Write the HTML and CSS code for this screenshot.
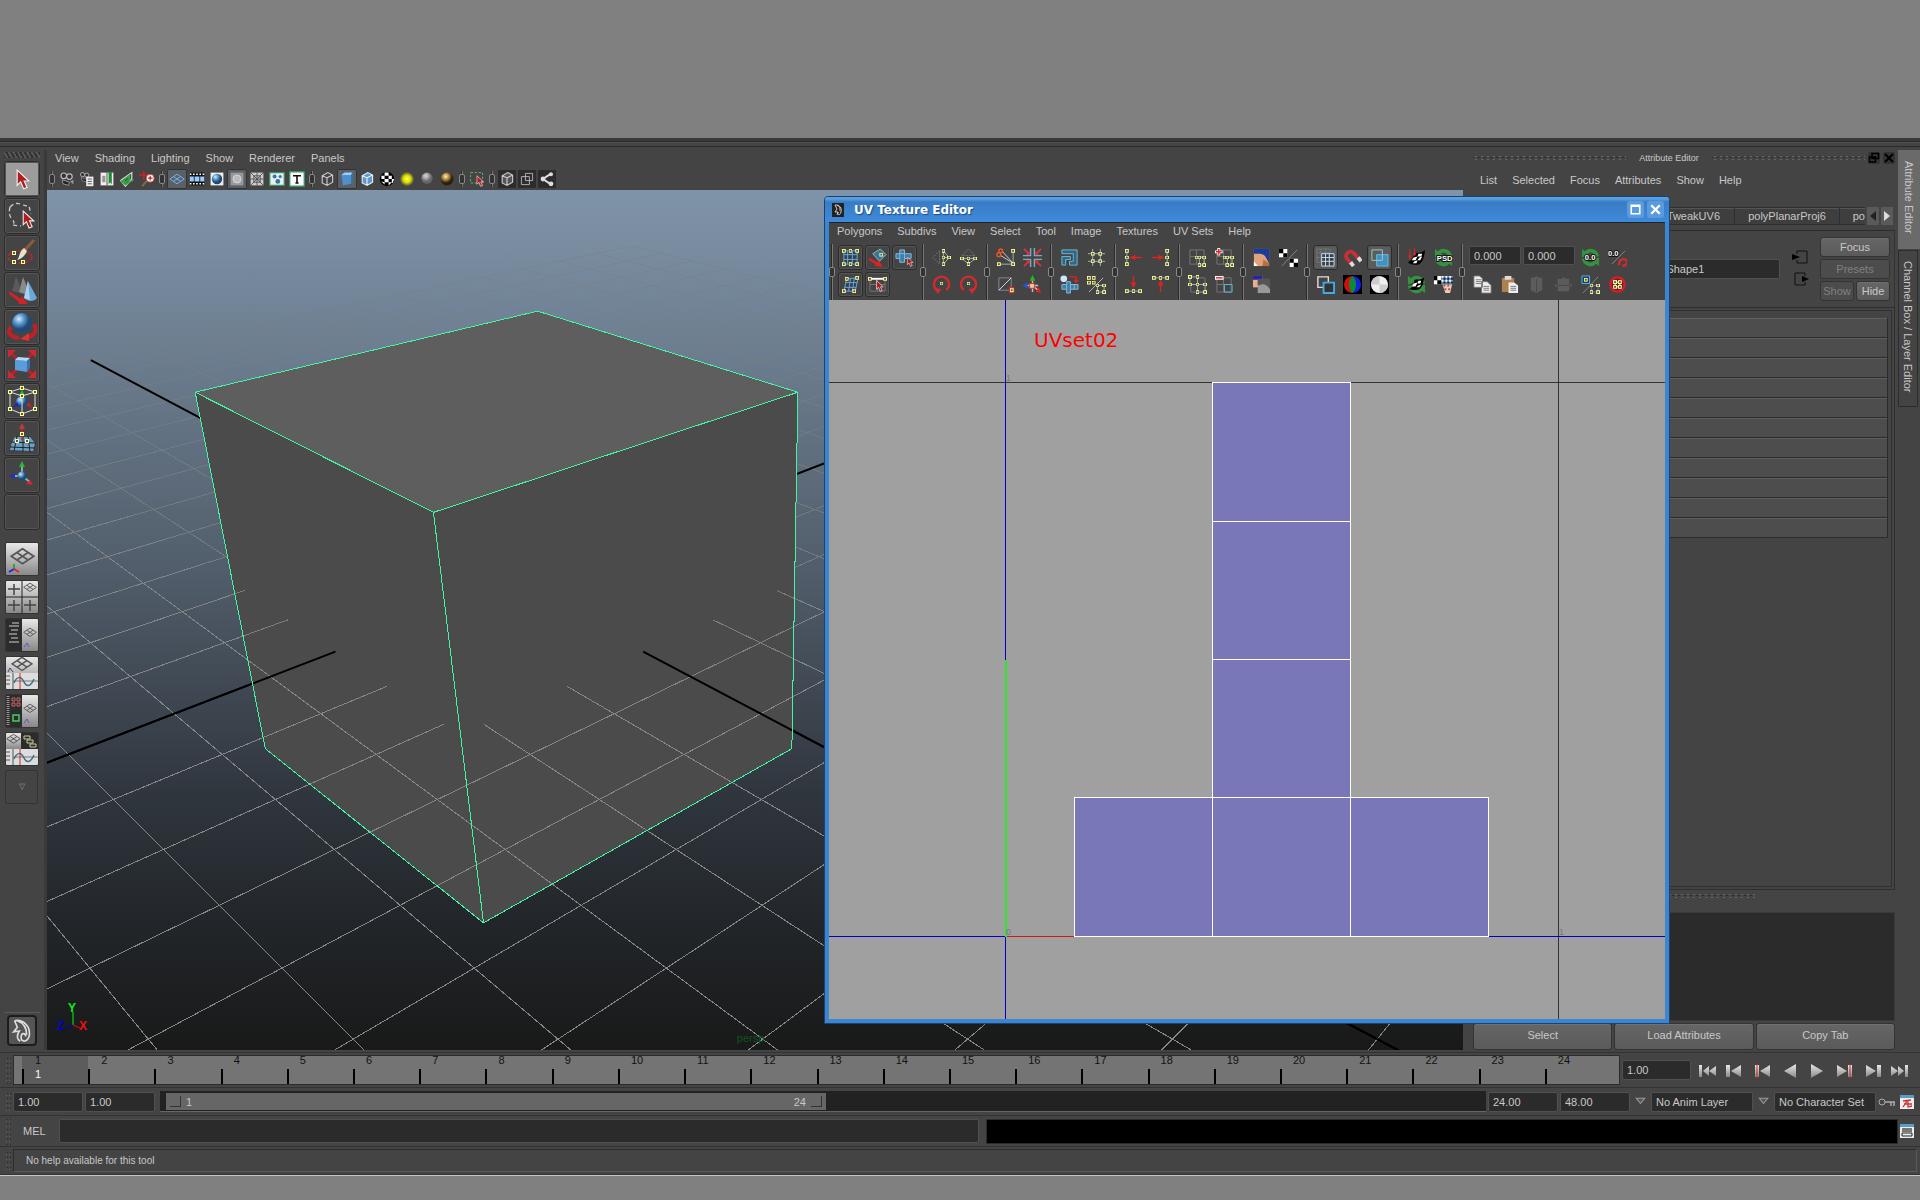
FILE: index.html
```html
<!DOCTYPE html>
<html lang="en">
<head>
    <meta charset="UTF-8">
    <meta name="viewport" content="width=device-width, initial-scale=1.0">
    <title>UV Texture Editor</title>
    <link rel="stylesheet" href="styles.css">
</head>
<body>
    <!-- Shared gradients, markers and symbols -->
    <svg class="defs" aria-hidden="true">
        <defs>
            <marker id="node" markerWidth="4" markerHeight="4" refX="2" refY="2" markerUnits="userSpaceOnUse"><rect x=".5" y=".5" width="3" height="3" fill="#555" stroke="#ffff90"/></marker>
            <radialGradient id="ball-blue" cx=".35" cy=".3"><stop offset="0" stop-color="#d8ecfa"/><stop offset=".5" stop-color="#5a9bd0"/><stop offset="1" stop-color="#1f4a75"/></radialGradient>
            <radialGradient id="ball-gray" cx=".4" cy=".3"><stop offset="0" stop-color="#ddd"/><stop offset="1" stop-color="#666"/></radialGradient>
            <radialGradient id="ball-gold" cx=".4" cy=".3"><stop offset="0" stop-color="#fff2c0"/><stop offset=".5" stop-color="#b08a40"/><stop offset="1" stop-color="#2a2010"/></radialGradient>
            <radialGradient id="glow"><stop offset="0" stop-color="#ffff50"/><stop offset=".5" stop-color="#dddd00"/><stop offset="1" stop-color="#dddd00" stop-opacity="0"/></radialGradient>
            <linearGradient id="metal" x2="0" y2="1"><stop offset="0" stop-color="#e8e8e8"/><stop offset="1" stop-color="#888"/></linearGradient>
            <symbol id="cursor" viewBox="0 0 12 18"><path d="M1 1v13l3-3 2.500 6 3-1.200-2.500-5.500H11z" fill="#b01c20" stroke="#eee"/></symbol>
            <symbol id="plane" viewBox="0 0 20 20"><path d="M10 3l9 6-9 6-9-6zM5.500 6l9 6M14.500 6l-9 6" fill="none" stroke="#555" stroke-width="1.300"/></symbol>
            <symbol id="graph" viewBox="0 0 32 16"><path d="M0 0h32v16H0z" fill="#ddd"/><path d="M7 0v16M0 3h4M0 7h4M0 11h4" stroke="#555"/><path d="M7 8h25" stroke="#777"/><path d="M8 10c3-7 7-7 10-1s7 4 10-3" fill="none" stroke="#3c7085" stroke-width="1.500"/><path d="M14 0v16" stroke="#d22"/></symbol>
            <symbol id="cube" viewBox="0 0 20 20"><path d="M4 6l7-4 6 3v9l-7 4-6-3zM4 6l6 2.500v9.500M10 8.500l7-3.500" stroke-width="1.400"/></symbol>
            <symbol id="camera" viewBox="0 0 20 20"><path d="M4 11l9 3-1 4-7-2z" fill="#222" stroke="#aaa"/><circle cx="6" cy="6" r="3.500" fill="#333" stroke="#bbb" stroke-width="1.500"/><circle cx="13" cy="7" r="3.500" fill="#333" stroke="#bbb" stroke-width="1.500"/><path d="M14 13l4-2v6z" fill="#999"/></symbol>
            <symbol id="checks" viewBox="0 0 8 8"><path d="M0 0h8v8H0z" fill="#fff"/><path d="M0 0h4v4H0zM4 4h4v4H4z" fill="#000"/></symbol>
            <symbol id="recycle" viewBox="0 0 20 20"><path d="M17 9a7 7 0 0 0-12-4" fill="none" stroke="#35933f" stroke-width="4"/><path d="M1 1v9l8-3z" fill="#35933f"/><path d="M3 11a7 7 0 0 0 12 4" fill="none" stroke="#35933f" stroke-width="4"/><path d="M19 19v-9l-8 3z" fill="#35933f"/></symbol>
        </defs>
    </svg>

    <div class="app">
        <div class="shelf-edge"></div>

        <div class="main">
            <!-- Tool box -->
            <aside class="toolbox">
                <div class="tools">
                    <div class="grip-h"></div>
                    <button class="tool active" aria-label="Select"><svg viewBox="0 0 32 32"><use href="#cursor" x="10" y="6" width="14" height="21"/></svg></button>
                    <button class="tool" aria-label="Lasso"><svg viewBox="0 0 32 32"><path d="M4 7q5-5 10-3t9 2l2 8M4 7q-2 8 2 12t0 6l9 1" fill="none" stroke="#ccc" stroke-width="1.300" stroke-dasharray="4 3"/><use href="#cursor" x="16" y="10" width="13" height="19"/></svg></button>
                    <button class="tool" aria-label="Paint select"><svg viewBox="0 0 32 32"><ellipse cx="14" cy="20" rx="12" ry="6" fill="none" stroke="#c22" stroke-width="1.500" stroke-dasharray="4 2"/><path d="M28 3L18 14" stroke="#8b5a3a" stroke-width="3"/><path d="M18 11l3 3c-2 5-6 8-10 9 3-3 2-9 7-12z" fill="#e5e2c8"/><path class="nodes" d="M8 16M8 25M17 25"/></svg></button>
                    <button class="tool" aria-label="Move"><svg viewBox="0 0 32 32"><path d="M10 3l8 17-12-3z" fill="#5a5a5a"/><path d="M17 3l8 19-12-4z" fill="#8a8a8a"/><path d="M22 7l9 17c-3 4-9 4-13 0z" fill="#6aa8d8"/><path d="M22 7l2 19-6-2z" fill="#a8d2f0"/><path d="M3 17l12 8 1-3 6 8-10 0 1-2L3 20z" fill="#d02228"/></svg></button>
                    <button class="tool" aria-label="Rotate"><svg viewBox="0 0 32 32"><path d="M5 16c-5 6 0 10 8 11M28 13c4 8-1 13-9 14" fill="none" stroke="#c02028" stroke-width="4"/><path d="M14 28l9-6v8z" fill="#d33"/><circle cx="16" cy="12" r="10" fill="url(#ball-blue)"/></svg></button>
                    <button class="tool" aria-label="Scale"><svg viewBox="0 0 32 32"><path d="M5 5l22 22M27 5L5 27" stroke="#c02028" stroke-width="2.500"/><path d="M2 2h8l-8 8zM30 2v8l-8-8zM2 30v-8l8 8zM30 30h-8l8-8z" fill="#d02830"/><path d="M9 12l12 1v11l-12-2z" fill="#5a9bdc"/><path d="M9 12l3-3 12 1-3 3z" fill="#b4dcfa"/><path d="M21 13l3-3v10l-3 4z" fill="#37a"/></svg></button>
                    <button class="tool" aria-label="Universal manipulator"><svg viewBox="0 0 32 32"><circle cx="16" cy="17" r="6" fill="url(#ball-blue)"/><path d="M13 11h6l-3-6z" fill="#2c2"/><path d="M7 22l4-5 2 4z" fill="#22c"/><path d="M26 23l-6-3 3-3z" fill="#c22"/><path class="nodes" d="M4 7l12-4 13 4v17l-13 5L4 24zl12 4 13-4M16 11v18" fill="none" stroke="#ddd"/></svg></button>
                    <button class="tool" aria-label="Soft modification"><svg viewBox="0 0 32 32"><path d="M9 15l15 0 5 6-2 8-23-1 2-8z" fill="#6aa0cc"/><path d="M11 14l-3 15M17 14v16M22 14l2 16M5 20l25 1M4 25l25 1" stroke="#222"/><path d="M16 18V6" stroke="#c22" stroke-width="1.500"/><path d="M16 1l-3 6h6z" fill="#c33"/><path class="nodes" d="M11 19M16 12M21 19"/></svg></button>
                    <button class="tool" aria-label="Show manipulator"><svg viewBox="0 0 32 32"><path d="M16 17V8M16 17l-8 0M16 17l8 6" stroke="#8ab" stroke-width="2"/><path d="M13 8h6l-3-6z" fill="#2b3"/><path d="M3 17l6-3v6z" fill="#23b"/><path d="M27 26l-7-1 4-4z" fill="#d23"/><circle cx="16" cy="17" r="4.500" fill="url(#ball-blue)"/></svg></button>
                    <button class="tool" aria-label="Last tool"></button>
                </div>
                <div class="layouts">
                    <button class="layout" aria-label="Single perspective view"><svg viewBox="0 0 32 32"><path d="M0 0h32v32H0z" fill="url(#metal)"/><use href="#plane" x="4" y="2" width="25" height="25"/><path d="M8 21v6" stroke="#2a4" stroke-width="2"/><path d="M8 26l-5 3" stroke="#22e" stroke-width="2"/><path d="M8 26l5 3" stroke="#e22" stroke-width="2"/></svg></button>
                    <button class="layout" aria-label="Four view"><svg viewBox="0 0 32 32"><path d="M0 0h32v32H0z" fill="url(#metal)"/><path d="M16 0v32M0 16h32" stroke="#222"/><path d="M8 3v11M2 8h12M8 19v11M2 24h12M24 19v11M18 24h12" stroke="#444" stroke-width="1.500"/><use href="#plane" x="17" y="0" width="14" height="14"/></svg></button>
                    <button class="layout" aria-label="Outliner and perspective"><svg viewBox="0 0 32 32"><path d="M0 0h32v32H0z" fill="#2c2c2c"/><path d="M16 0h16v32H16z" fill="url(#metal)"/><path d="M6 4h7M3 7h10M5 11h7M3 15h8M5 19h7M3 23h10" stroke="#ccc"/><use href="#plane" x="17" y="7" width="14" height="14"/><path d="M18 28l3-4 2 4" fill="none" stroke="#55c"/></svg></button>
                    <button class="layout" aria-label="Perspective and graph"><svg viewBox="0 0 32 32"><path d="M0 0h32v32H0z" fill="url(#metal)"/><use href="#plane" x="5" y="-3" width="22" height="22"/><path d="M2 15l2-4 3 4" fill="none" stroke="#447"/><use href="#graph" y="16" width="32" height="16"/></svg></button>
                    <button class="layout" aria-label="Hypershade and perspective"><svg viewBox="0 0 32 32"><path d="M0 0h32v32H0z" fill="#2c2c2c"/><path d="M16 0h16v32H16z" fill="url(#metal)"/><path d="M2 1v30" stroke="#999" stroke-width="3" stroke-dasharray="1 1"/><path d="M6 3h3v3H6zM11 3h3v3h-3zM6 8h3v3H6zM11 8h3v3h-3z" fill="none" stroke="#c66"/><path d="M7 20h6v6H7z" fill="none" stroke="#4c6" stroke-width="1.500"/><use href="#plane" x="17" y="7" width="14" height="14"/><path d="M18 28l3-4 2 4" fill="none" stroke="#55c"/></svg></button>
                    <button class="layout" aria-label="Perspective, hypergraph and graph"><svg viewBox="0 0 32 32"><path d="M0 0h32v32H0z" fill="#2c2c2c"/><path d="M0 0h15v16H0z" fill="url(#metal)"/><use href="#plane" x="0" y="-1" width="15" height="15"/><path d="M18 3h6v3h-6zM21 7h6v3h-6zM24 11h6v3h-6z" fill="none" stroke="#cc9"/><use href="#graph" y="16" width="32" height="16"/></svg></button>
                    <button class="layout more" aria-label="More layouts">▽</button>
                </div>
                <button class="logo" aria-label="Maya"><svg viewBox="0 0 28 28"><path d="M6 3c9-2 17 6 16 15-1 8-9 9-9 3s5-5 5-1M9 3c8 3 10 9 10 15M6 3l3 7-4 5 6-1c-3 5-2 9 1 11" fill="none" stroke="#ddd" stroke-width="1.800"/></svg></button>
            </aside>

            <!-- Perspective panel -->
            <section class="panel">
                <nav class="menu panel-menu">
                    <button>View</button><button>Shading</button><button>Lighting</button><button>Show</button><button>Renderer</button><button>Panels</button>
                </nav>
                <div class="panel-tools">
                    <i class="sep"></i>
                    <button aria-label="Select camera"><svg viewBox="0 0 20 20"><use href="#camera"/></svg></button>
                    <button aria-label="Camera attributes"><svg viewBox="0 0 20 20"><use href="#camera" width="15" height="15"/><path d="M9 7h9v12H9z" fill="#eee"/><path d="M11 10h5M11 13h5M11 16h5" stroke="#333"/></svg></button>
                    <button aria-label="Bookmarks"><svg viewBox="0 0 20 20"><path d="M2 2h16v16H2z" fill="#eee"/><path d="M10 2v16" stroke="#333"/><path d="M12 1h4v16l-2-3-2 3z" fill="#283"/><path d="M4 6h4v8H4z" fill="#999"/></svg></button>
                    <button aria-label="Image plane"><svg viewBox="0 0 20 20"><path d="M2 12L16 2v8L8 19z" fill="#444" stroke="#ddd" stroke-width="1.500"/><path d="M2 12l6 5 10-6M5 12l8-6v4l-5 4z" fill="none" stroke="#3a4" stroke-width="2"/></svg></button>
                    <button aria-label="2D pan and zoom"><svg viewBox="0 0 20 20"><path d="M6 0v11M0 5h11" stroke="#c22" stroke-width="2"/><path d="M10 12l-6 7" stroke="#864" stroke-width="2.500"/><circle cx="14" cy="9" r="5" fill="#fff" stroke="#a33"/><path d="M14 6v6M11 9h6" stroke="#b22" stroke-width="1.500"/></svg></button>
                    <i class="sep"></i>
                    <button class="on" aria-label="Grid"><svg viewBox="0 0 20 20"><path d="M10 4l9 6-9 6-9-6zM5.500 7l9 6M14.500 7l-9 6" fill="#4a6680" stroke="#9bd"/></svg></button>
                    <button aria-label="Film gate"><svg viewBox="0 0 20 20"><path d="M1 2h18v16H1z" fill="#111"/><path d="M1 4h18M1 16h18" stroke="#fff" stroke-width="2" stroke-dasharray="2 2"/><path d="M1 7h5v6H1zM7 7h6v6H7zM14 7h5v6h-5z" fill="#9cf"/></svg></button>
                    <button aria-label="Resolution gate"><svg viewBox="0 0 20 20"><path d="M2 2h16v16H2z" fill="#eee"/><circle cx="10" cy="10" r="6.500" fill="url(#ball-blue)"/></svg></button>
                    <button class="on" aria-label="Gate mask"><svg viewBox="0 0 20 20"><path d="M2 2h16v16H2z" fill="#999"/><circle cx="10" cy="10" r="5" fill="#bbb" stroke="#ddd"/></svg></button>
                    <button aria-label="Field chart"><svg viewBox="0 0 20 20"><path d="M2 2h16v16H2z" fill="#ccc"/><path d="M2 2l16 16M18 2L2 18M10 2v16M2 10h16M6 6h8v8H6z" fill="none" stroke="#444"/></svg></button>
                    <button aria-label="Safe action"><svg viewBox="0 0 20 20"><path d="M1 2h18v16H1z" fill="#eee" stroke="#396" stroke-width="1.500"/><circle cx="7" cy="7" r="2.500" fill="#37a"/><circle cx="14" cy="7" r="2" fill="#37a"/><circle cx="11" cy="13" r="3" fill="#37a"/></svg></button>
                    <button aria-label="Safe title"><svg viewBox="0 0 20 20"><path d="M1 1h18v18H1z" fill="#fff" stroke="#396" stroke-width="1.500"/><path d="M5 6h10M10 6v9M8 15h4" stroke="#111" stroke-width="2"/></svg></button>
                    <i class="sep"></i>
                    <button aria-label="Wireframe"><svg viewBox="0 0 20 20" fill="none" stroke="#ccc"><use href="#cube"/></svg></button>
                    <button class="on" aria-label="Smooth shade"><svg viewBox="0 0 20 20"><path d="M3 5l12-1v12L5 18z" fill="#4f8fcc"/><path d="M3 5l4-3h10l-2 3z" fill="#9cf"/><path d="M15 5l2-3v11l-2 3z" fill="#37a"/></svg></button>
                    <button aria-label="Wireframe on shaded"><svg viewBox="0 0 20 20" fill="#5a9ad0" stroke="#eee"><use href="#cube"/></svg></button>
                    <button aria-label="Textured"><svg viewBox="0 0 20 20"><circle cx="10" cy="10" r="9" fill="#000"/><path d="M7 2h5v4H7zM3 6h4v4H3zM12 6h4v4h-4zM7 10h5v4H7zM16 10h3l-2 5h-1zM12 14h4l-4 4zM3 13l4 1v3z" fill="#fff"/></svg></button>
                    <button aria-label="Use all lights"><svg viewBox="0 0 20 20"><circle cx="10" cy="10" r="9" fill="url(#glow)"/></svg></button>
                    <button aria-label="Shadows"><svg viewBox="0 0 20 20"><circle cx="10" cy="9" r="7" fill="url(#ball-gray)"/></svg></button>
                    <button aria-label="High quality"><svg viewBox="0 0 20 20"><circle cx="10" cy="10" r="8" fill="url(#ball-gold)"/></svg></button>
                    <i class="sep"></i>
                    <button aria-label="Isolate select"><svg viewBox="0 0 20 20"><path d="M2 2h15v13H2z" fill="none" stroke="#6c7" stroke-dasharray="3 2"/><use href="#cursor" x="9" y="5" width="10" height="15"/></svg></button>
                    <i class="sep"></i>
                    <button class="dark" aria-label="X-ray"><svg viewBox="0 0 20 20" fill="#555" stroke="#ccc"><use href="#cube"/></svg></button>
                    <button class="dark" aria-label="X-ray components"><svg viewBox="0 0 20 20"><path d="M3 7h10v10H3zM8 3h9v9H8z" fill="none" stroke="#ccc"/></svg></button>
                    <button class="dark" aria-label="X-ray joints"><svg viewBox="0 0 20 20"><path d="M14 4L5 10l9 6" fill="none" stroke="#ddd" stroke-width="2.500"/><circle cx="5" cy="10" r="3" fill="#ddd"/><circle cx="15" cy="4" r="2.500" fill="#ddd"/><circle cx="15" cy="16" r="3" fill="#ddd"/></svg></button>
                </div>
                <svg class="viewport" viewBox="47 190 1416 859" preserveAspectRatio="xMinYMin slice" role="img" aria-label="Perspective view of a cube">
                    <defs>
                        <linearGradient id="sky" x2="0" y2="1"><stop offset="0" stop-color="#8094a9"/><stop offset=".2" stop-color="#6b7c8e"/><stop offset=".45" stop-color="#505c69"/><stop offset=".7" stop-color="#30363e"/><stop offset=".85" stop-color="#22262a"/><stop offset="1" stop-color="#191919"/></linearGradient>
                        <linearGradient id="fade" gradientUnits="userSpaceOnUse" x1="0" x2="0" y1="240" y2="700"><stop offset="0" stop-color="#777" stop-opacity=".3"/><stop offset=".4" stop-color="#808386" stop-opacity=".5"/><stop offset="1" stop-color="#848688"/></linearGradient>
                    </defs>
                    <path d="M47 190h1416v859H47z" fill="url(#sky)"/>
                    <path id="grid-back" class="grid" stroke="url(#fade)"/>
                    <path id="axes-back" class="axes"/>
                    <path d="M195 392L537 311l260 81-6 356-308 174-218-174z" fill="#4b4b4b"/>
                    <path d="M195 392l342-81 260 81-364 120z" fill="#5e5e5e"/>
                    <path id="grid-front" class="grid" stroke="url(#fade)"/>
                    <path id="axes-front" class="axes"/>
                    <path class="edges" d="M195 392l342-81 260 81-6 356-308 174-218-174zl238 120 364-120M433 512l50 410"/>
                    <path d="M73 1024v-13" stroke="#0f0"/><path d="M73 1024l-7 3" stroke="#00c"/><path d="M73 1024l7 3" stroke="#e00"/>
                    <text class="axis y" x="68" y="1011">Y</text>
                    <text class="axis z" x="57" y="1029">Z</text>
                    <text class="axis x" x="79" y="1029">X</text>
                    <text class="camera-name" x="736" y="1041">persp</text>
                </svg>
            </section>

            <!-- Attribute editor -->
            <section class="attributes">
                <header class="attr-title"><i class="dots"></i><span>Attribute Editor</span><i class="dots"></i><button aria-label="Float"><svg viewBox="0 0 12 12"><path d="M4 1.500h6.500v5H4zM1.500 5h6v5h-6z" fill="none" stroke="#000" stroke-width="1.500"/></svg></button><button aria-label="Close panel"><svg viewBox="0 0 12 12"><path d="M2 2l8 8M10 2l-8 8" stroke="#000" stroke-width="2"/></svg></button></header>
                <nav class="menu attr-menu">
                    <button>List</button><button>Selected</button><button>Focus</button><button>Attributes</button><button>Show</button><button>Help</button>
                </nav>
                <div class="attr-tabs">
                    <button class="tab first">polyTweakUV6</button><button class="tab">polyPlanarProj6</button><button class="tab cut">po</button>
                    <button class="arrow" aria-label="Previous tab"><svg viewBox="0 0 12 18"><path d="M9 4v10L3 9z" fill="#222"/></svg></button><button class="arrow" aria-label="Next tab"><svg viewBox="0 0 12 18"><path d="M3 4v10l6-5z" fill="#ddd"/></svg></button>
                </div>
                <div class="attr-node">
                    <input class="field name" type="text" value="pCubeShape1" aria-label="mesh">
                    <div class="io">
                        <button aria-label="Go to input"><svg viewBox="0 0 20 16"><path d="M7 5V2h10v12H7v-3" fill="none" stroke="#111"/><path d="M2 5l8 3-8 3z"/></svg></button>
                        <button aria-label="Go to output"><svg viewBox="0 0 20 16"><path d="M15 5V2H5v12h10v-3" fill="none" stroke="#111"/><path d="M12 5l7 3-7 3z"/></svg></button>
                    </div>
                    <div class="node-buttons">
                        <button class="btn wide">Focus</button>
                        <button class="btn wide" disabled>Presets</button>
                        <button class="btn" disabled>Show</button>
                        <button class="btn">Hide</button>
                    </div>
                </div>
                <div class="attr-frame">
                    <div class="attr-list"><i></i><i></i><i></i><i></i><i></i><i></i><i></i><i></i><i></i><i></i><i></i></div>
                </div>
                <div class="splitter"><i class="dots"></i></div>
                <textarea class="notes" aria-label="Notes"></textarea>
                <footer class="attr-footer">
                    <button class="btn">Select</button><button class="btn">Load Attributes</button><button class="btn">Copy Tab</button>
                </footer>
            </section>

            <nav class="side-tabs">
                <button class="active">Attribute Editor</button>
                <button>Channel Box / Layer Editor</button>
            </nav>
        </div>

        <!-- Time slider -->
        <div class="row time-row">
            <i class="grip"></i>
            <div class="timeline" id="timeline"></div>
            <input class="field" type="text" value="1.00" aria-label="Current time">
            <div class="playback">
                <button aria-label="Go to start"><svg viewBox="0 0 20 16"><path d="M2 2h3v12H2zM12 3v10L6 8zM19 3v10l-7-5z" fill="url(#metal)"/></svg></button>
                <button aria-label="Step back"><svg viewBox="0 0 20 16"><path d="M2 2h4v12H2zM17 2v12L7 8z" fill="url(#metal)"/></svg></button>
                <button aria-label="Previous key"><svg viewBox="0 0 20 16"><path d="M3 2h4v12H3zM18 2v12L8 8z" fill="url(#metal)"/><path d="M5 0v16" stroke="#c22"/></svg></button>
                <button aria-label="Play backwards"><svg viewBox="0 0 20 16"><path d="M16 1v14L4 8z" fill="url(#metal)"/></svg></button>
                <button aria-label="Play forwards"><svg viewBox="0 0 20 16"><path d="M4 1v14l12-7z" fill="url(#metal)"/></svg></button>
                <button aria-label="Next key"><svg viewBox="0 0 20 16"><path d="M13 2h4v12h-4zM2 2v12l10-6z" fill="url(#metal)"/><path d="M15 0v16" stroke="#c22"/></svg></button>
                <button aria-label="Step forward"><svg viewBox="0 0 20 16"><path d="M14 2h4v12h-4zM3 2v12l10-6z" fill="url(#metal)"/></svg></button>
                <button aria-label="Go to end"><svg viewBox="0 0 20 16"><path d="M15 2h3v12h-3zM8 3v10l6-5zM1 3v10l7-5z" fill="url(#metal)"/></svg></button>
            </div>
        </div>

        <!-- Range slider -->
        <div class="row range-row">
            <i class="grip"></i>
            <input class="field" type="text" value="1.00" aria-label="Animation start">
            <input class="field" type="text" value="1.00" aria-label="Playback start">
            <div class="range"><div class="range-bar"><i></i><span>1</span><span class="end">24</span><i></i></div></div>
            <input class="field" type="text" value="24.00" aria-label="Playback end">
            <input class="field" type="text" value="48.00" aria-label="Animation end">
            <button class="drop" aria-label="Animation layers"><svg viewBox="0 0 16 12"><path d="M4 3h8l-4 5z" fill="#555" stroke="#999"/></svg></button>
            <input class="field set" type="text" value="No Anim Layer" aria-label="Animation layer">
            <button class="drop" aria-label="Character sets"><svg viewBox="0 0 16 12"><path d="M4 3h8l-4 5z" fill="#555" stroke="#999"/></svg></button>
            <input class="field set" type="text" value="No Character Set" aria-label="Character set">
            <button class="mini" aria-label="Auto key"><svg viewBox="0 0 18 16"><circle cx="4" cy="8" r="3" fill="none" stroke="#aaa"/><path d="M7 8h10M13 8v4M16 8v4" fill="none" stroke="#aaa" stroke-width="1.500"/></svg></button>
            <button class="mini" aria-label="Preferences"><svg viewBox="0 0 18 16"><path d="M2 1h14v14H2z" fill="#eee"/><path d="M2 1h14v3H2z" fill="#5a9bc8"/><path d="M13 6L5 7M5 13l4-6M10 7v6l4-1M6 10h8" fill="none" stroke="#c33" stroke-width="1.300"/></svg></button>
        </div>

        <!-- Command line -->
        <div class="row command-row">
            <i class="grip"></i>
            <label for="command">MEL</label>
            <input class="field" type="text" id="command">
            <output class="result"></output>
            <button class="mini" aria-label="Script editor"><svg viewBox="0 0 18 16"><path d="M2 1h14v14H2z" fill="#eee"/><path d="M2 1h14v3H2z" fill="#5a9bc8"/><path d="M4 5h10v4H4z" fill="#777"/><path d="M4 10h10v3H4z" fill="none" stroke="#222"/></svg></button>
        </div>

        <!-- Help line -->
        <div class="row help-row">
            <i class="grip"></i>
            <p>No help available for this tool</p>
        </div>
    </div>

    <!-- UV Texture Editor window -->
    <div class="window">
        <header class="titlebar">
            <svg class="app-icon" viewBox="0 0 12 14"><path d="M0 0h12v14H0z" fill="#222"/><path d="M3 2c5 0 7 3 6 7s-4 3-3 0M3 2l2 4-2 3h3l-1 3M5 2c3 1 3 4 3 6" fill="none" stroke="#ccc"/></svg>
            <h1>UV Texture Editor</h1>
            <button aria-label="Maximize"><svg viewBox="0 0 16 16"><path d="M4 4h8v8H4zM4 5h8" fill="none" stroke="#fff" stroke-width="1.500"/></svg></button>
            <button aria-label="Close"><svg viewBox="0 0 16 16"><path d="M4 4l8 8M12 4l-8 8" stroke="#fff" stroke-width="2.200"/></svg></button>
        </header>
        <div class="window-body">
            <nav class="menu uv-menu">
                <button>Polygons</button><button>Subdivs</button><button>View</button><button>Select</button><button>Tool</button><button>Image</button><button>Textures</button><button>UV Sets</button><button>Help</button>
            </nav>
            <div class="uv-tools">
                <i class="sep"></i>
                <div class="group three">
                    <button class="boxed" aria-label="UV lattice"><svg viewBox="0 0 20 20"><path d="M3 3h14v14H3zM7 3v14M12 3v14M3 7h14M3 12h14" fill="#2c4257" stroke="#79a8cc"/><path class="nodes" d="M3 3M10 3M17 3M3 17M10 17M17 17"/></svg></button>
                    <button class="boxed" aria-label="Move UV shell"><svg viewBox="0 0 20 20"><path d="M5 6l8-5 6 6-7 7z" fill="#3f7591" stroke="#8bc"/><path d="M1 10l9 5 1-2 5 7-9-1 1-2-7-4z" fill="#d22"/><path class="nodes" d="M14 7"/></svg></button>
                    <button class="boxed" aria-label="Shortest edge path"><svg viewBox="0 0 20 20"><path d="M1 6h4V2h5v4h7v5h-7v4H5v-4H1zM5 6v5M10 6v5M5 6h5" fill="#3f7ea5" stroke="#8bd"/><use href="#cursor" x="12" y="9" width="8" height="11"/></svg></button>
                    <button class="boxed" aria-label="UV smudge"><svg viewBox="0 0 20 20"><path d="M6 4l12-1-3 14-12 0zM10 4l-2 13M14 3l-2 14M5 8h12M4 13h12" fill="#2c4257" stroke="#79a8cc"/><path class="nodes" d="M6 4M17 3M3 17M14 17"/></svg></button>
                    <button class="boxed" aria-label="Select edge"><svg viewBox="0 0 20 20"><path d="M2 4v13h16V4M10 4v13M2 10h16" fill="none" stroke="#777"/><path class="nodes" d="M2 4h16" stroke="#fff" stroke-width="2"/><use href="#cursor" x="8" y="5" width="9" height="13"/></svg></button>
                </div>
                <i class="sep"></i>
                <div class="group">
                    <button aria-label="Flip U"><svg viewBox="0 0 20 20"><path d="M8 3L1 10l7 7z" fill="none" stroke="#777" stroke-dasharray="2 1"/><path class="nodes" d="M12 3v14l6-7zM12 10h6" fill="none" stroke="#9bb"/></svg></button>
                    <button aria-label="Flip V"><svg viewBox="0 0 20 20"><path d="M3 8l7-7 7 7z" fill="none" stroke="#777" stroke-dasharray="2 1"/><path class="nodes" d="M3 11h14l-7 6zM10 11v6" fill="none" stroke="#9bb"/></svg></button>
                    <button aria-label="Rotate counter-clockwise"><svg viewBox="0 0 20 20"><path d="M5 16A8 8 0 1 1 15 16" fill="none" stroke="#d22a30" stroke-width="2.500"/><path d="M2 13l8 2-4 5z" fill="#d22a30"/><path class="nodes" d="M10 9"/></svg></button>
                    <button aria-label="Rotate clockwise"><svg viewBox="0 0 20 20"><path d="M5 16A8 8 0 1 1 15 16" fill="none" stroke="#d22a30" stroke-width="2.500"/><path d="M18 13l-8 2 4 5z" fill="#d22a30"/><path class="nodes" d="M10 9"/></svg></button>
                </div>
                <i class="sep"></i>
                <div class="group">
                    <button aria-label="Cut UVs"><svg viewBox="0 0 20 20"><path d="M5 8l13 8M7 4l11 12" stroke="#ccc"/><circle cx="5" cy="3" r="2" fill="none" stroke="#e52" stroke-width="1.500"/><circle cx="3" cy="7" r="2" fill="none" stroke="#e52" stroke-width="1.500"/><path class="nodes" d="M18 3v14H3" fill="none" stroke="#9bb"/></svg></button>
                    <button aria-label="Sew UVs"><svg viewBox="0 0 20 20"><path d="M8 0v8H0M12 0v8h8M8 20v-8H0M12 20v-8h8" fill="none" stroke="#79a8cc" stroke-width="1.500"/><path d="M1 1l5 5M19 1l-5 5M1 19l5-5M19 19l-5-5" stroke="#d33" stroke-width="2"/><path d="M7 3v4H3zM13 3v4h4zM7 17v-4H3zM13 17v-4h4z" fill="#d33"/></svg></button>
                    <button aria-label="Split UVs"><svg viewBox="0 0 20 20"><path d="M3 3h13v13H3z" fill="none" stroke="#889"/><path d="M3 16L16 3" stroke="#ddd"/><path d="M14 13h5v6h-5z" fill="#777" stroke="#d22"/><path class="nodes" d="M16.500 16"/></svg></button>
                    <button aria-label="Move and sew"><svg viewBox="0 0 20 20"><path d="M10 6v12M2 11h14M10 11l7 6" stroke="#cbb" stroke-width="1.500"/><path d="M7 6h6l-3-6z" fill="#2b2"/><path d="M-1 11l6-3v6z" fill="#25d"/><path d="M19 19l-6-1 4-5z" fill="#d22"/><path d="M7 9h5v5H7z" fill="#eca" stroke="#c33"/></svg></button>
                </div>
                <i class="sep"></i>
                <div class="group">
                    <button aria-label="Layout"><svg viewBox="0 0 20 20"><path d="M2 2h16v16h-8v-4h4V6H2z" fill="#2d6688" stroke="#7bc"/><path d="M2 9h9v3H6v6H2z" fill="#2d6688" stroke="#7bc"/></svg></button>
                    <button aria-label="Grid UVs"><svg viewBox="0 0 20 20"><path d="M1 6h18M1 14h18M6 1v18M14 1v18" stroke="#9bb"/><path class="nodes" d="M6 6M14 6M6 14M14 14"/></svg></button>
                    <button aria-label="Unfold"><svg viewBox="0 0 20 20"><circle cx="4" cy="4" r="3.500" fill="#cfe6f5"/><path d="M10 2h7v4" fill="none" stroke="#d22" stroke-width="1.500"/><path d="M14 5h6l-3 4z" fill="#d22"/><path d="M2 10h5V7h4v3h8v5h-8v4H7v-4H2zM7 10v5M11 10v5M15 10v5" fill="#3f7ea5" stroke="#8bd"/></svg></button>
                    <button aria-label="Relax"><svg viewBox="0 0 20 20"><path d="M2 18L17 3" stroke="#bbb"/><path class="nodes" d="M2 3M7 3M2 8M7 8"/><path class="nodes" d="M11 11h7v7h-7z" fill="none" stroke="#9bb"/></svg></button>
                </div>
                <i class="sep"></i>
                <div class="group">
                    <button aria-label="Align minimum U"><svg viewBox="0 0 20 20"><path class="nodes" d="M3 3v7v7" fill="none" stroke="#9bb"/><path d="M10 10h9" stroke="#d22" stroke-width="1.500"/><path d="M6 10l6-3v6z" fill="#d22"/></svg></button>
                    <button aria-label="Align maximum U"><svg viewBox="0 0 20 20"><path class="nodes" d="M17 3v7v7" fill="none" stroke="#9bb"/><path d="M1 10h9" stroke="#d22" stroke-width="1.500"/><path d="M14 10L8 7v6z" fill="#d22"/></svg></button>
                    <button aria-label="Align minimum V"><svg viewBox="0 0 20 20"><path class="nodes" d="M3 17h7h7" fill="none" stroke="#9bb"/><path d="M10 1v9" stroke="#d22" stroke-width="1.500"/><path d="M10 14L7 8h6z" fill="#d22"/></svg></button>
                    <button aria-label="Align maximum V"><svg viewBox="0 0 20 20"><path class="nodes" d="M3 3h7h7" fill="none" stroke="#9bb"/><path d="M10 9v9" stroke="#d22" stroke-width="1.500"/><path d="M10 5L7 11h6z" fill="#d22"/></svg></button>
                </div>
                <i class="sep"></i>
                <div class="group">
                    <button aria-label="Isolate select"><svg viewBox="0 0 20 20"><path d="M2 2h15v15H2zM2 9h15M9 2v15" fill="none" stroke="#777"/><path class="nodes" d="M9 10h8v8h-5v-8" fill="none" stroke="#9bb"/></svg></button>
                    <button aria-label="Add selected"><svg viewBox="0 0 20 20"><path d="M2 2h15v15H2zM2 9h15M9 2v15" fill="none" stroke="#777"/><path d="M4 0v8M0 4h8" stroke="#fff" stroke-width="3"/><path d="M4 1v6M1 4h6" stroke="#d22" stroke-width="1.500"/><path class="nodes" d="M10 10h8v8h-5v-8" fill="none" stroke="#9bb"/></svg></button>
                    <button aria-label="Remove all"><svg viewBox="0 0 20 20"><path d="M10 3h8v8M3 11v7h8" fill="none" stroke="#777"/><path class="nodes" d="M2 2h8v8H2zM10 10h8v8h-8z" fill="none" stroke="#9bb"/></svg></button>
                    <button aria-label="Remove selected"><svg viewBox="0 0 20 20"><path d="M2 3h15v15H2zM2 10h15M9 3v15" fill="none" stroke="#777"/><path d="M10 10h8v8h-8z" fill="none" stroke="#5bd"/><path d="M0 3h9" stroke="#fff" stroke-width="4"/><path d="M1 3h7" stroke="#d22" stroke-width="1.500"/></svg></button>
                </div>
                <i class="sep"></i>
                <div class="group">
                    <button aria-label="Display image"><svg viewBox="0 0 20 20"><path d="M2 1h16v18H2z" fill="#e0a27c"/><path d="M2 1h16v15l-4-7c-2-3-5-3-8-3H2z" fill="#1a3c9c"/><path d="M2 14l4 5H2z" fill="#fff"/><path d="M12 12l6 4v3h-7z" fill="#b87040"/></svg></button>
                    <button aria-label="Toggle filtered image"><svg viewBox="0 0 20 20"><path d="M3 19L19 2" stroke="#888"/><use href="#checks" x="0" y="1" width="9" height="9"/><use href="#checks" x="11" y="11" width="9" height="9"/></svg></button>
                    <button aria-label="Dim image"><svg viewBox="0 0 20 20"><path d="M1 1h10v12H1z" fill="#eab08a"/><path d="M1 1h10v4H1z" fill="#22a"/><path d="M6 6h13v13H6z" fill="#999"/><path d="M6 4h13v11c-3-5-7-6-9-5l-4 1z" fill="#555"/></svg></button>
                </div>
                <i class="sep"></i>
                <div class="group three">
                    <button class="boxed on" aria-label="View grid"><svg viewBox="0 0 20 20"><path d="M1 1h14v14H1zM5 1v14M10 1v14M1 5h14M1 10h14" fill="none" stroke="#888" stroke-dasharray="1 1"/><path d="M6 6h13v13H6zM10 6v13M14 6v13M6 10h13M6 14h13" fill="#34424e" stroke="#cde"/></svg></button>
                    <button aria-label="Pixel snap"><svg viewBox="0 0 20 20"><path d="M17 12l-5-6C8 1 1 6 4 11l5 6" fill="none" stroke="#c83038" stroke-width="4"/><path d="M8 15l3 4M16 10l3 4" stroke="#ddd" stroke-width="4"/></svg></button>
                    <button class="boxed on" aria-label="Shade UVs"><svg viewBox="0 0 20 20"><path d="M7 7h12v12H7z" fill="#4690bd" stroke="#6bd"/><path d="M2 2h11v11H2z" fill="none" stroke="#9cc"/></svg></button>
                    <button aria-label="Texture borders"><svg viewBox="0 0 20 20"><path d="M2 2h11v11H2z" fill="none" stroke="#ddd" stroke-width="1.500"/><path d="M8 8h11v11H8z" fill="#333" stroke="#4ad" stroke-width="2"/></svg></button>
                    <button aria-label="RGB channels"><svg viewBox="0 0 20 20"><path d="M0 0h20v20H0z"/><path d="M10 1a9 9 0 0 0 0 18z" fill="#c11"/><path d="M10 1a9 9 0 0 1 0 18z" fill="#12d"/><path d="M10 1c-5 4-5 14 0 18 5-4 5-14 0-18z" fill="#183"/></svg></button>
                    <button aria-label="Alpha channel"><svg viewBox="0 0 20 20"><path d="M0 0h20v20H0z"/><circle cx="10" cy="10" r="9" fill="#eee"/><path d="M10 1v9H1a9 9 0 0 1 9-9zM10 10h9a9 9 0 0 1-9 9z" fill="#ccc"/></svg></button>
                </div>
                <i class="sep"></i>
                <div class="group">
                    <button aria-label="Bake texture"><svg viewBox="0 0 20 20"><path d="M8 5c4 0 8 0 11-3-1 6-1 11-6 15-4 1-9 1-12-2 4-2 6-5 7-10z" fill="#000"/><path d="M12 6h4l-1 3h-4zM7 10l4-1-2 4H5zM13 10l3-1-2 4h-3zM8 14l3-1-1 3H6z" fill="#fff"/><path d="M3 1v9M8 0v7" stroke="#d22"/><path d="M1 8h4l-2 4zM6 5h4L8 9z" fill="#d22"/></svg></button>
                    <button aria-label="Update PSD networks"><svg viewBox="0 0 20 20"><use href="#recycle" width="20" height="20"/><text class="badge" x="3" y="14">PSD</text></svg></button>
                    <button aria-label="Force texture rebake"><svg viewBox="0 0 20 20"><use href="#recycle" width="20" height="20"/><path d="M8 5c4 0 7 0 10-2-1 5-1 9-5 12-4 1-7 1-11 0 4-2 5-5 6-10z"/><path d="M12 6h3l-1 3h-3zM7 9l4-1-2 4H5zM12 11l3-1-2 3h-3z" fill="#fff"/></svg></button>
                    <button aria-label="Image ratio"><svg viewBox="0 0 20 20"><use href="#checks" x="-1" y="1" width="9" height="9"/><path d="M8 1h12v9H8z" fill="#68a"/><path d="M8 2h12M8 6h12" stroke="#fff" stroke-width="2" stroke-dasharray="2 2"/><path d="M10 4h10M10 8h10" stroke="#124" stroke-width="2" stroke-dasharray="2 2"/><path d="M9 10h10l-2 9h-5z" fill="#ecb"/><path d="M10 11h8M11 15h6" stroke="#a54" stroke-width="2" stroke-dasharray="2 2"/></svg></button>
                </div>
                <i class="sep"></i>
                <div class="group coords">
                    <input class="field" type="text" value="0.000" aria-label="U coordinate">
                    <input class="field" type="text" value="0.000" aria-label="V coordinate">
                    <button aria-label="Refresh values"><svg viewBox="0 0 20 20"><use href="#recycle" width="20" height="20"/><text class="badge" x="4" y="13">0.0</text></svg></button>
                    <button aria-label="Toggle relative"><svg viewBox="0 0 20 20"><path d="M4 17L18 3" stroke="#888"/><path d="M12 18c-2-6 7-9 8-3 0 3-3 4-5 3" fill="none" stroke="#d22a30" stroke-width="2.500"/><text class="badge" x="0" y="8">0.0</text></svg></button>
                    <button aria-label="Copy"><svg viewBox="0 0 20 20"><path d="M1 1h6l3 3v9H1zM9 7h6l4 4v8H9z" fill="#eee" stroke="#777"/><path d="M3 5h6M3 7h6M3 9h6M11 12h6M11 14h6M11 16h6" stroke="#777"/></svg></button>
                    <button aria-label="Paste"><svg viewBox="0 0 20 20"><path d="M2 3h13v15H2z" fill="#b07f50"/><path d="M5 1h7v4H5z" fill="#ddd"/><path d="M9 8h6l4 3v8H9z" fill="#eee"/><path d="M11 12h6M11 14h6M11 16h6" stroke="#777"/></svg></button>
                    <button disabled aria-label="Paste U"><svg viewBox="0 0 20 20"><path d="M4 3h3l3-2 3 2h3v13l-6 3-6-3z" fill="#5c5c5c"/><path d="M10 4v14" stroke="#484848"/></svg></button>
                    <button disabled aria-label="Paste V"><svg viewBox="0 0 20 20"><path d="M4 4h4l2-2 2 2h4v6h3v2h-3v5H4v-5H1v-2h3z" fill="#5c5c5c"/><path d="M3 11h14" stroke="#484848"/></svg></button>
                    <button aria-label="Copy and paste mode"><svg viewBox="0 0 20 20"><path d="M1 1h8v8H1z" fill="#1d3f66" stroke="#5bd"/><path d="M2 19L18 2" stroke="#888"/><path class="nodes" d="M5 5M11 11h7v7h-7z" fill="none" stroke="#57c"/></svg></button>
                    <button aria-label="Cycle UVs"><svg viewBox="0 0 20 20"><circle cx="10" cy="10" r="7.500" fill="#622" stroke="#d81c30" stroke-width="2.500"/><path class="nodes" d="M7.500 7.500h5v5h-5z" fill="none" stroke="#fff"/></svg></button>
                </div>
            </div>
            <svg class="uv-canvas" viewBox="829 300 836 719" preserveAspectRatio="xMinYMin slice" role="img" aria-label="UV layout of the cube">
                <path d="M829 382.500h836M1558.500 300v719" stroke="#333"/>
                <path d="M829 936.500h836M1005.500 300v719" stroke="#0000c8"/>
                <path d="M1006 936.500h69" stroke="#d01818"/>
                <path d="M1006 660v277" stroke="#2ee62e" stroke-width="2"/>
                <text class="tick" x="1006" y="381">1</text><text class="tick" x="1006" y="935">0</text><text class="tick" x="1559" y="935">1</text>
                <path d="M1212.500 382.500h138v415h138v139h-414v-139h138z" fill="#7a77b8"/>
                <path d="M1212.500 797.500v-415h138v415M1212.500 521.500h138M1212.500 659.500h138M1074.500 797.500h414v139h-414zM1212.500 797.500v139M1350.500 797.500v139" fill="none" stroke="#fff"/>
                <text class="uv-set" x="1034" y="347">UVset02</text>
            </svg>
        </div>
    </div>

    <script src="script.js"></script>
</body>
</html>
```
FILE: styles.css
```css
* {
    box-sizing: border-box;
}

body {
    margin: 0;
    padding: 138px 0 24px;
    min-height: 100vh;
    display: flex;
    position: relative;
    background: #808080;
    color: #c8c8c8;
    font-family: "Liberation Sans", Arial, sans-serif;
    font-size: 11px;
    line-height: 14px;
    overflow: hidden;
}

button, input, textarea {
    font: inherit;
    color: inherit;
    margin: 0;
    padding: 0;
    border: none;
    background: none;
    min-width: 0;
}

button svg {
    display: block;
}

.defs {
    position: absolute;
    width: 0;
    height: 0;
}

.nodes {
    marker: url(#node);
}

.app {
    flex: 1;
    min-width: 0;
    display: flex;
    flex-direction: column;
    background: #444;
    border-bottom: 1px solid #c8c8c8;
}

.shelf-edge {
    height: 9px;
    border-bottom: 1px solid #2a2a2a;
    background: linear-gradient(#3a3a3a 0 3px, #2a2a2a 3px 4px, #505050 4px 5px, #444 5px);
}

.main {
    flex: 1;
    display: flex;
    min-height: 0;
    padding: 3px 0 2px;
    border-bottom: 1px solid #333;
}

/* Tool box */
.toolbox {
    width: 47px;
    padding: 0 4px 4px 4px;
    border-right: 3px solid #3a3a3a;
    display: flex;
    flex-direction: column;
}

.tools {
    display: flex;
    flex-direction: column;
    gap: 1px;
    margin-bottom: 12px;
}

.grip-h {
    height: 6px;
    margin: 2px 0 2px;
    background: repeating-linear-gradient(60deg, #333 0 2px, #555 2px 4px);
}

.tool {
    width: 36px;
    height: 36px;
    padding: 1px;
    border: 1px solid #2c2c2c;
    border-radius: 3px;
    box-shadow: inset 0 0 0 1px #555;
}

.tool.active {
    background: #9c9c9c;
}

.layouts {
    flex: 1;
    display: flex;
    flex-direction: column;
    gap: 4px;
    padding-left: 1px;
    border-bottom: 1px solid #5a5a5a;
    margin-bottom: 2px;
}

.layout {
    width: 34px;
    height: 34px;
    border: 1px solid #333;
    border-radius: 2px;
    overflow: hidden;
}

.layout.more {
    width: 33px;
    font-size: 8px;
    color: #999;
}

.logo {
    width: 30px;
    height: 31px;
    margin-left: 3px;
    border: 2px solid #1c1c1c;
    border-radius: 4px;
    background: #555;
}

/* Menus */
.menu {
    display: flex;
    gap: 15px;
}

.menu button {
    height: 14px;
}

/* Perspective panel */
.panel {
    flex: 1;
    min-width: 0;
    display: flex;
    flex-direction: column;
}

.panel-menu {
    gap: 16px;
    height: 18px;
    padding: 1px 0 0 8px;
}

.panel-tools {
    height: 22px;
    display: flex;
    align-items: center;
}

.panel-tools button {
    width: 20px;
    height: 20px;
    padding: 2px;
    border-radius: 2px;
}

.panel-tools .on {
    background: #5a6068;
    box-shadow: inset 0 0 0 1px #333;
}

.panel-tools .dark {
    background: #2c2c2c;
    border: 1px solid #444;
    padding: 1px;
}

.sep {
    width: 10px;
    display: flex;
    justify-content: center;
    align-items: center;
    align-self: stretch;
    background: linear-gradient(90deg, transparent 4px, #2c2c2c 4px 5px, #777 5px 6px, transparent 6px) no-repeat;
}

.sep::after {
    content: "";
    width: 4px;
    height: 8px;
    border: 1px solid #888;
    border-radius: 2px;
    background: #333;
}

.panel-tools .sep {
    margin: 3px 0;
}

.viewport {
    flex: 1;
    width: 100%;
    min-height: 0;
    display: block;
}

.grid {
    fill: none;
    shape-rendering: crispEdges;
}

.axes {
    fill: none;
    stroke: #000;
    stroke-width: 2;
}

.edges {
    fill: none;
    stroke: #43f5a0;
    shape-rendering: crispEdges;
}

.axis {
    font-size: 12px;
    font-weight: bold;
}

.axis.x { fill: #f01010; }
.axis.y { fill: #10f010; }
.axis.z { fill: #0000d0; }

.camera-name {
    fill: #0b5524;
    font-size: 11px;
}

/* Attribute editor */
.attributes {
    width: 435px;
    padding: 0 3px 0 10px;
    display: flex;
    flex-direction: column;
}

.attr-title {
    display: flex;
    align-items: center;
    height: 15px;
    gap: 3px;
    font-size: 9px;
}

.attr-title span {
    padding: 0 10px;
}

.attr-title button {
    width: 12px;
    height: 12px;
    background: #333;
    border-radius: 2px;
}

.dots {
    height: 5px;
    flex: 1;
    background: radial-gradient(circle, #666 1px, transparent 1px) 0 0 / 6px 3px, radial-gradient(circle, #2c2c2c 1px, transparent 1px) 3px 1px / 6px 3px;
}

.attr-menu {
    height: 42px;
    padding: 8px 7px 0;
    align-items: flex-start;
}

.attr-tabs {
    height: 18px;
    display: flex;
    padding-right: 2px;
}

.tab {
    width: 105px;
    border: 1px solid #2e2e2e;
    border-left: none;
    background: #3e3e3e;
    box-shadow: inset 0 1px #555;
}

.tab.first {
    flex: 1;
    text-align: right;
    padding-right: 14px;
}

.tab.cut {
    width: 25px;
    text-align: right;
    border-right: none;
}

.arrow {
    width: 12px;
    margin-left: 2px;
    background: #5a5a5a;
}

.attr-node {
    display: flex;
    justify-content: flex-end;
    margin-top: 5px;
    padding: 6px 4px 0 0;
    height: 77px;
    border-top: 1px solid #2c2c2c;
    border-right: 1px solid #333;
}

.field {
    height: 20px;
    padding: 0 4px;
    border: 1px solid #505050;
    border-radius: 2px;
    background: #2b2b2b;
}

.attr-node .name {
    width: 151px;
    margin-top: 22px;
}

.io {
    display: flex;
    flex-direction: column;
    gap: 6px;
    width: 20px;
    margin: 12px 10px 0;
}

.io button {
    height: 16px;
}

.node-buttons {
    display: grid;
    grid-template-columns: 34px 34px;
    grid-auto-rows: 20px;
    gap: 2px;
}

.btn {
    background: linear-gradient(#666, #5a5a5a);
    border: 1px solid #333;
    border-radius: 3px;
    box-shadow: inset 0 1px #707070;
}

.btn.wide {
    grid-column: span 2;
}

.btn:disabled {
    background: #4c4c4c;
    color: #808080;
    box-shadow: none;
}

.attr-frame {
    flex: 1;
    padding: 10px 6px 0 0;
    border: 1px solid #2e2e2e;
    box-shadow: inset 0 0 0 2px #444, inset 0 0 0 3px #303030;
}

.attr-list {
    display: grid;
    grid-auto-rows: 20px;
}

.attr-list i {
    background: #4d4d4d;
    border: solid #2c2c2c;
    border-width: 0 1px 1px 0;
    box-shadow: inset 0 1px #606060;
}

.splitter {
    display: flex;
    align-items: flex-start;
    height: 22px;
    padding: 3px 140px 0;
}

.notes {
    height: 109px;
    border: 1px solid #3a3a3a;
    background: #2b2b2b;
    resize: none;
}

.attr-footer {
    display: grid;
    grid-template-columns: 1fr 1fr 1fr;
    gap: 2px;
    height: 27px;
    margin-top: 2px;
}

.attr-footer .btn {
    padding-bottom: 3px;
}

.side-tabs {
    width: 22px;
    display: flex;
    flex-direction: column;
    gap: 1px;
    align-items: flex-start;
}

.side-tabs button {
    writing-mode: vertical-rl;
    width: 20px;
    padding: 10px 0 14px;
    border: 1px solid #2c2c2c;
    background: #444;
}

.side-tabs .active {
    width: 22px;
    border-color: #6a6a6a;
    background: #6a6a6a;
}

/* Rows under the main area */
.row {
    display: flex;
    align-items: center;
    border-bottom: 1px solid #333;
}

.grip {
    width: 5px;
    height: 28px;
    margin: 0 2px 0 6px;
    background: radial-gradient(circle, #2c2c2c 1px, transparent 1px) 0 0 / 3px 5px, radial-gradient(circle, #666 1px, transparent 1px) 2px 2px / 3px 5px;
}

.time-row {
    height: 35px;
}

.timeline {
    flex: 1;
    height: 30px;
    margin-right: 2px;
    padding: 0 8px 0 8px;
    display: grid;
    grid-template-columns: repeat(24, 1fr);
    background: #747474;
    border: 1px solid #2c2c2c;
    color: #111;
}

.frame {
    display: flex;
    flex-direction: column;
    padding-left: 13px;
    line-height: 9px;
    background: linear-gradient(#000, #000) 0 13px / 2px 15px no-repeat;
}

.frame.current {
    background-color: #5c5c5c;
}

.frame b {
    color: #fff;
    font-weight: normal;
    padding-top: 5px;
}

.time-row .field {
    width: 69px;
}

.playback {
    display: flex;
    padding: 2px 6px 0 2px;
    width: 229px;
    justify-content: space-around;
}

.playback button {
    width: 20px;
}

.range-row {
    height: 28px;
    gap: 2px;
    padding-right: 4px;
}

.range-row .grip {
    height: 22px;
    margin-right: 0;
}

.range-row .field {
    width: 70px;
}

.range-row .field.set {
    width: 102px;
}

.range {
    flex: 1;
    height: 21px;
    margin: 0 0 0 3px;
    padding: 2px 0 2px 6px;
    background: #222;
    border-bottom: 1px solid #666;
}

.range-bar {
    width: 50%;
    height: 17px;
    display: flex;
    align-items: center;
    gap: 5px;
    padding: 0 4px;
    background: #666;
}

.range-bar i {
    width: 11px;
    height: 11px;
    border: solid #333;
    border-width: 0 1px 1px 0;
}

.range-bar .end {
    margin-left: auto;
}

.drop {
    width: 17px;
}

.mini {
    width: 18px;
}

.command-row {
    height: 31px;
}

.command-row label {
    width: 46px;
    padding-left: 10px;
}

.command-row .field {
    flex: 1;
    height: 24px;
}

.result {
    flex: 1;
    height: 25px;
    margin: 0 0 0 7px;
    background: #000;
    border: 1px solid #2c2c2c;
}

.command-row .mini {
    margin-right: 4px;
}

.help-row {
    height: 28px;
}

.help-row .grip {
    height: 22px;
}

.help-row p {
    flex: 1;
    margin: 0 3px 0 0;
    height: 23px;
    padding: 4px 12px;
    font-size: 10px;
    border: 1px solid #2c2c2c;
    border-right-color: #5a5a5a;
    border-bottom-color: #5a5a5a;
}

/* UV Texture Editor window */
.window {
    position: absolute;
    left: 824px;
    right: 250px;
    top: 196px;
    bottom: 176px;
    display: flex;
    flex-direction: column;
    padding: 0 4px 4px;
    background: #3d86cd;
    border: 1px solid #16447a;
    border-radius: 4px 4px 0 0;
}

.titlebar {
    height: 25px;
    margin: 0 -4px;
    padding: 0 5px 0 7px;
    display: flex;
    align-items: center;
    gap: 3px;
    background: linear-gradient(#5a9fe0 0 2px, #3a7cc4 5px, #3d8adb);
    border-radius: 3px 3px 0 0;
}

.titlebar h1 {
    flex: 1;
    margin: 0 0 0 7px;
    font: bold 12px/16px "DejaVu Sans", sans-serif;
    color: #fff;
    text-shadow: 1px 1px 1px #1c4a80;
}

.app-icon {
    width: 12px;
    height: 14px;
}

.titlebar button {
    width: 17px;
    height: 17px;
    background: #5a9ade;
    border-radius: 3px;
}

.window-body {
    flex: 1;
    min-height: 0;
    display: flex;
    flex-direction: column;
    background: #444;
    border-top: 1px solid #222;
}

.uv-menu {
    height: 21px;
    padding: 1px 8px 0;
}

.uv-tools {
    display: flex;
    height: 56px;
    margin-left: -2px;
}

.group {
    display: grid;
    grid-template-columns: 27px 27px;
    grid-auto-rows: 27px;
}

.group.three {
    grid-template-columns: 27px 27px 27px;
}

.group button {
    width: 25px;
    height: 25px;
    padding: 2px;
    margin: 1px;
    border: 1px solid transparent;
    border-radius: 3px;
}

.group button.boxed {
    border-color: #2c2c2c;
    box-shadow: inset 0 0 0 1px #555;
}

.group button.on {
    background: #5c5c5c;
}

.group.coords {
    grid-template-columns: repeat(6, 27px);
    padding-left: 2px;
}

.group .field {
    grid-column: span 2;
    width: 52px;
    height: 19px;
    margin-top: 2px;
}

.badge {
    font-size: 8px;
    font-weight: bold;
    fill: #fff;
    stroke: #111;
    stroke-width: 2px;
    paint-order: stroke;
}

.uv-canvas {
    flex: 1;
    width: 100%;
    min-height: 0;
    display: block;
    background: #a0a0a0;
    shape-rendering: crispEdges;
}

.tick {
    font-size: 9px;
    fill: #777;
}

.uv-set {
    font: 20px "DejaVu Sans", sans-serif;
    fill: #f00;
}
```
FILE: script.js
```js
// Perspective of the ground grid: u and v are grid units from the origin
const HALF = 12;
const CUBE = 2.27;

function project(u, v) {
    const scale = 1 / (0.008118 - 0.000323 * (u + v));
    const x = 755 - 1.966 * scale + (u - v) / 2 * scale;
    const y = -106.7 + scale / 0.1787;
    return x.toFixed(1) + ' ' + y.toFixed(1);
}

// One segment along each direction at the offset c
function segments(c, from, to) {
    return 'M' + project(c, from) + 'L' + project(c, to) +
        'M' + project(from, c) + 'L' + project(to, c);
}

function drawGrid() {
    let back = '';
    let front = '';
    for (let c = -HALF; c <= HALF; c++) {
        if (c === 0) continue;
        const end = Math.min(HALF, 22 - c);
        back += segments(c, -HALF, end);
        front += segments(c, c > CUBE ? -HALF : CUBE, end);
    }
    document.getElementById('grid-back').setAttribute('d', back);
    document.getElementById('grid-front').setAttribute('d', front);
    document.getElementById('axes-back').setAttribute('d', segments(0, -HALF, HALF));
    document.getElementById('axes-front').setAttribute('d', segments(0, CUBE, HALF));
}

// Frame numbers 1 to 24
function drawTimeline() {
    const timeline = document.getElementById('timeline');
    for (let i = 1; i <= 24; i++) {
        const frame = document.createElement('div');
        frame.className = 'frame';
        frame.textContent = i;
        if (i === 1) {
            frame.classList.add('current');
            const current = document.createElement('b');
            current.textContent = i;
            frame.appendChild(current);
        }
        timeline.appendChild(frame);
    }
}

drawGrid();
drawTimeline();
```
